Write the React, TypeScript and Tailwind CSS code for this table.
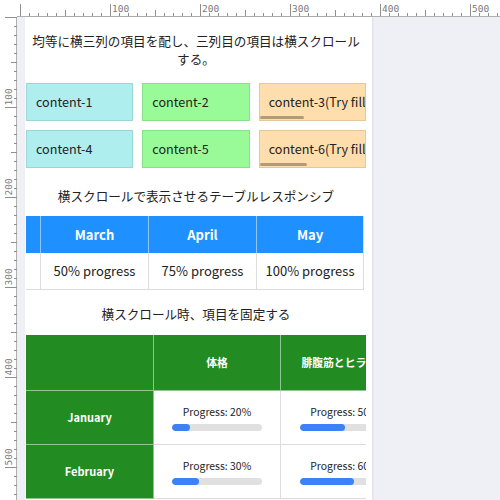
import React from "react";

function TopRuler() {
  const els: React.ReactNode[] = [];
  for (let k = 0; k <= 53; k++) {
    const x = 20 + 9 * k + 0.5;
    const v = k * 10;
    const len = v % 100 === 0 ? 12 : v % 50 === 0 ? 6 : 3;
    els.push(<line key={"t" + k} x1={x} x2={x} y1={16} y2={16 - len} stroke="#8f8f8f" strokeWidth={1} />);
    if (v % 100 === 0 && v > 0) {
      els.push(
        <text key={"l" + k} x={x + 1.5} y={11.5} fontSize={9.5} fill="#7a7a7a" fontFamily="'DejaVu Sans Mono', monospace">
          {v}
        </text>
      );
    }
  }
  return (
    <svg width={500} height={17} className="block">
      <line x1={17} x2={500} y1={16.5} y2={16.5} stroke="#b0b0b0" strokeWidth={1} />
      {els}
    </svg>
  );
}

function LeftRuler() {
  const els: React.ReactNode[] = [];
  for (let k = 0; k <= 53; k++) {
    const y = 9 * k + 0.5;
    const v = k * 10;
    const len = v % 100 === 0 ? 12 : v % 50 === 0 ? 6 : 3;
    els.push(<line key={"t" + k} x1={17} x2={17 - len} y1={y} y2={y} stroke="#8f8f8f" strokeWidth={1} />);
    if (v % 100 === 0 && v > 0) {
      els.push(
        <text
          key={"l" + k}
          transform={`translate(11.5, ${y - 2}) rotate(-90)`}
          fontSize={9.5}
          fill="#7a7a7a"
          fontFamily="'DejaVu Sans Mono', monospace"
        >
          {v}
        </text>
      );
    }
  }
  return (
    <svg width={17} height={483} className="block">
      <line x1={16.5} x2={16.5} y1={0} y2={483} stroke="#b0b0b0" strokeWidth={1} />
      {els}
    </svg>
  );
}

function Card({ bg, text, thumb }: { bg: string; text: string; thumb?: number }) {
  return (
    <div className={`relative h-[38px] border border-black/10 flex items-center pl-[9px] text-[12.6px] text-[#222] whitespace-nowrap overflow-hidden ${bg}`}>
      {text}
      {thumb ? (
        <div className="absolute left-0 bottom-[1px] h-[3px] rounded-sm bg-black/30" style={{ width: thumb }} />
      ) : null}
    </div>
  );
}

function Bar({ pct }: { pct: number }) {
  return (
    <div className="w-[90px] h-[7px] rounded-full bg-[#e0e0e0] overflow-hidden">
      <div className="h-full rounded-full bg-[#3b82f6]" style={{ width: `${pct}%` }} />
    </div>
  );
}

function ProgCell({ pct, last }: { pct: number; last?: boolean }) {
  return (
    <div className={`w-[127px] shrink-0 h-full flex flex-col items-center justify-center gap-[5px] bg-white ${last ? "" : "border-r border-[#dcdcdc]"}`}>
      <div className="text-[10.4px] leading-[14px] text-[#222] whitespace-nowrap">Progress: {pct}%</div>
      <Bar pct={pct} />
    </div>
  );
}

export default function App() {
  const months = [
    { m: "February", p: "25% progress" },
    { m: "March", p: "50% progress" },
    { m: "April", p: "75% progress" },
    { m: "May", p: "100% progress" },
  ];
  return (
    <div className="w-[500px] h-[500px] overflow-hidden bg-[#eef0f5] flex flex-col font-['Noto_Sans_CJK_JP','Noto_Sans',sans-serif]">
      <div className="h-[17px] shrink-0 bg-white">
        <TopRuler />
      </div>
      <div className="flex flex-1 min-h-0">
        <div className="w-[17px] shrink-0 bg-white">
          <LeftRuler />
        </div>
        <div className="flex-1 pl-[8px]">
          <div className="w-[347px] h-full bg-white pl-px pr-[6px] pt-[15px] shadow-[1px_0_2px_rgba(0,0,0,0.08)] overflow-hidden">
            <div className="text-center text-[12.6px] leading-[18px] text-[#222]">
              均等に横三列の項目を配し、三列目の項目は横スクロール
              <br />
              する。
            </div>

            <div className="mt-[15px] grid grid-cols-3 gap-[9px]">
              <Card bg="bg-[#afeeee]" text="content-1" />
              <Card bg="bg-[#98fb98]" text="content-2" />
              <Card bg="bg-[#ffdead]" text="content-3(Try fill the long text here)" thumb={44} />
              <Card bg="bg-[#afeeee]" text="content-4" />
              <Card bg="bg-[#98fb98]" text="content-5" />
              <Card bg="bg-[#ffdead]" text="content-6(Try fill the long text here)" thumb={47} />
            </div>

            <div className="mt-[19px] text-center text-[12.6px] leading-[18px] text-[#222]">
              横スクロールで表示させるテーブルレスポンシブ
            </div>

            <div className="mt-[11px] w-[340px] overflow-hidden">
              <div className="ml-[-94px] flex flex-col w-max">
                <div className="flex h-[37px] bg-[#1e90ff]">
                  {months.map((c, i) => (
                    <div
                      key={c.m}
                      className={`w-[108px] shrink-0 flex items-center justify-center text-white font-bold text-[13px] border-l border-white/50 ${i === months.length - 1 ? "border-r border-r-[#dcdcdc]" : ""}`}
                    >
                      {c.m}
                    </div>
                  ))}
                </div>
                <div className="flex h-[37px] border-b border-[#dcdcdc]">
                  {months.map((c, i) => (
                    <div
                      key={c.m}
                      className={`w-[108px] shrink-0 flex items-center justify-center text-[#222] text-[13px] border-l border-[#dcdcdc] whitespace-nowrap ${i === 0 ? "pr-[8px]" : ""} ${i === months.length - 1 ? "border-r" : ""}`}
                    >
                      {c.p}
                    </div>
                  ))}
                </div>
              </div>
            </div>

            <div className="mt-[15px] text-center text-[12.6px] leading-[18px] text-[#222]">
              横スクロール時、項目を固定する
            </div>

            <div className="mt-[12px] w-[340px] overflow-hidden">
              <div className="flex flex-col w-max">
                <div className="flex h-[56px] bg-[#228b22] border-b border-white/50 text-white font-bold text-[10.8px]">
                  <div className="w-[128px] shrink-0 border-r border-white/50" />
                  <div className="w-[127px] shrink-0 border-r border-white/50 flex items-center justify-center">体格</div>
                  <div className="w-[127px] shrink-0 flex items-center justify-center whitespace-nowrap">腓腹筋とヒラメ筋</div>
                </div>
                {[
                  { m: "January", a: 20, b: 50 },
                  { m: "February", a: 30, b: 60 },
                ].map((r) => (
                  <div key={r.m} className="flex h-[54px]">
                    <div className="w-[128px] shrink-0 bg-[#228b22] border-r border-b border-white/50 flex items-center justify-center text-white font-bold text-[11px]">
                      {r.m}
                    </div>
                    <div className="flex border-b border-[#dcdcdc]">
                      <ProgCell pct={r.a} />
                      <ProgCell pct={r.b} last />
                    </div>
                  </div>
                ))}
              </div>
            </div>
          </div>
        </div>
      </div>
    </div>
  );
}
